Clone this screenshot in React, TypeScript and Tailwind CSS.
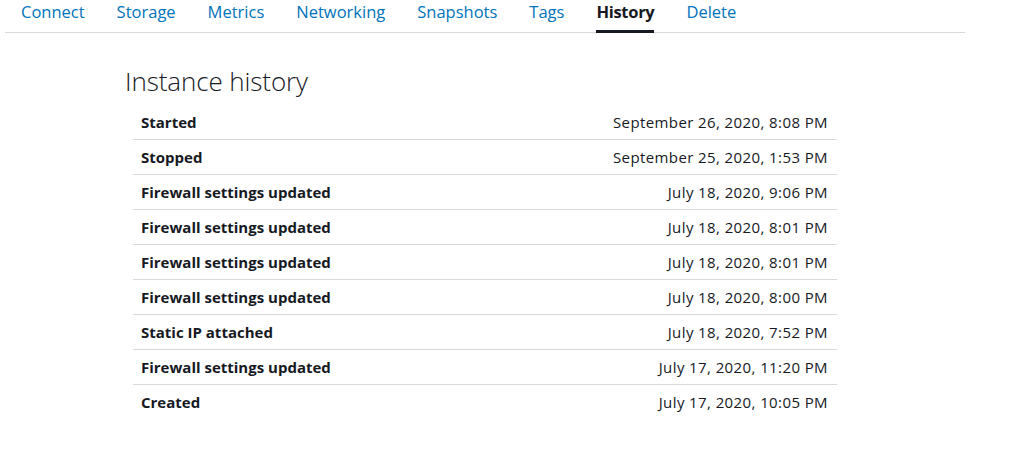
const tabs = ['Connect', 'Storage', 'Metrics', 'Networking', 'Snapshots', 'Tags', 'History', 'Delete'];

const events = [
  { name: 'Started', at: 'September 26, 2020, 8:08 PM' },
  { name: 'Stopped', at: 'September 25, 2020, 1:53 PM' },
  { name: 'Firewall settings updated', at: 'July 18, 2020, 9:06 PM' },
  { name: 'Firewall settings updated', at: 'July 18, 2020, 8:01 PM' },
  { name: 'Firewall settings updated', at: 'July 18, 2020, 8:01 PM' },
  { name: 'Firewall settings updated', at: 'July 18, 2020, 8:00 PM' },
  { name: 'Static IP attached', at: 'July 18, 2020, 7:52 PM' },
  { name: 'Firewall settings updated', at: 'July 17, 2020, 11:20 PM' },
  { name: 'Created', at: 'July 17, 2020, 10:05 PM' },
];

export default function App() {
  return (
    <div className="h-[454px] w-[1012px] bg-white font-['Open_Sans',sans-serif] text-[#16191f]">
      <nav className="ml-[5px] flex w-[960px] border-b border-[#d5dbdb]">
        {tabs.map((tab) => {
          const active = tab === 'History';
          return (
            <div
              key={tab}
              className={
                active
                  ? 'mb-[-1px] mx-4 flex h-[33px] items-start border-b-[3px] border-[#16191f] text-[16.5px] font-bold tracking-[-0.3px] text-[#16191f]'
                  : 'mx-4 flex h-[32px] items-start text-[16.5px] text-[#0073bb]'
              }
            >
              {tab}
            </div>
          );
        })}
      </nav>

      <section className="ml-[125px] mt-[30px]">
        <h2 className="text-[26px] font-light leading-[36px] tracking-[-0.1px]">Instance history</h2>
        <div className="ml-[8px] mt-[6px] w-[704px]">
          {events.map((ev, i) => (
            <div
              key={i}
              className={
                'flex h-[35px] items-center justify-between pl-[8px] pr-[9px] text-[15px]' +
                (i < events.length - 1 ? ' border-b border-[#d5dbdb]' : '')
              }
            >
              <span className="font-bold">{ev.name}</span>
              <span className="tracking-[0.4px]">{ev.at}</span>
            </div>
          ))}
        </div>
      </section>
    </div>
  );
}
